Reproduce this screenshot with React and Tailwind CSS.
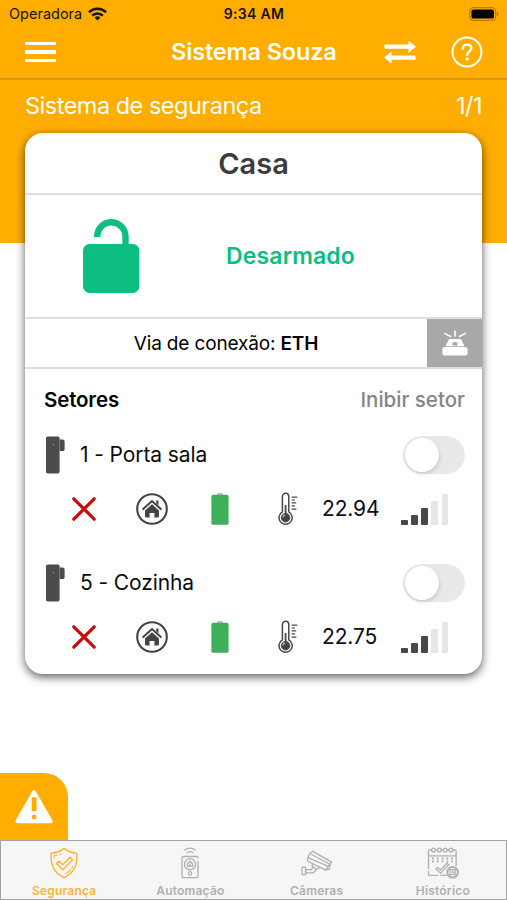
const sectors = [
  { id: 1, name: "1 - Porta sala", temperature: "22.94", signal: 3 },
  { id: 5, name: "5 - Cozinha", temperature: "22.75", signal: 3 },
];

const signalBars = [5, 10, 17, 24, 31];

const WifiIcon = () => (
  <svg className="h-[14px] w-[19px]" viewBox="0 0 19 14" fill="none" stroke="#1a1204" strokeWidth="2.6">
    <path d="M1 5.2a12.2 12.2 0 0 1 17 0" />
    <path d="M4.2 8.6a7.6 7.6 0 0 1 10.6 0" />
    <path d="M9.5 13.6 6.6 10.7a4.2 4.2 0 0 1 5.8 0Z" fill="#1a1204" stroke="none" />
  </svg>
);

const BatteryStatusIcon = () => (
  <svg className="h-[14px] w-[30px]" viewBox="0 0 30 14">
    <rect x="0.7" y="0.7" width="26" height="12.6" rx="3.8" fill="none" stroke="#b87e08" strokeWidth="1.3" />
    <rect x="2.4" y="2.4" width="22.6" height="9.2" rx="2.2" fill="#000" />
    <path d="M28 4.6c1.8.6 1.8 4.2 0 4.8Z" fill="#b87e08" />
  </svg>
);

const SwapIcon = () => (
  <svg className="h-6 w-8" viewBox="0 0 32 24" fill="#fff">
    <path d="M.5 4.6h24V.8L32 6.7l-7.5 6V8.8H.5Z" />
    <path d="M31.5 15.6h-24v-4L0 17.6l7.5 6v-3.8h24Z" />
  </svg>
);

const HelpIcon = () => (
  <svg className="h-8 w-8" viewBox="0 0 32 32" fill="none" stroke="#fff" strokeWidth="2">
    <circle cx="16" cy="16" r="14.5" />
    <path
      d="M11.8 12.6c0-2.5 1.9-4 4.3-4 2.5 0 4.2 1.5 4.2 3.7 0 3.4-4.1 3.3-4.1 6.5"
      strokeWidth="2.4"
      strokeLinecap="round"
    />
    <circle cx="16.2" cy="22.9" r="1.7" fill="#fff" stroke="none" />
  </svg>
);

const UnlockedIcon = () => (
  <svg className="h-[74px] w-[57px]" viewBox="0 0 57 74">
    <path d="M14.1 18A14.1 14.1 0 0 1 42.5 17v9" fill="none" stroke="#0cbf80" strokeWidth="6.4" />
    <rect x="0" y="25" width="56.4" height="49" rx="6.5" fill="#0cbf80" />
  </svg>
);

const SirenIcon = () => (
  <svg className="h-[26px] w-[26px]" viewBox="0 0 26 26">
    <path
      d="M13 1v5M2.6 3.4l6 3.1M23.4 3.4l-6 3.1"
      stroke="#fff"
      strokeWidth="1.6"
      strokeLinecap="round"
    />
    <path d="M7.4 9.8h11.2l2.9 5.8h-17Z" fill="#fff" stroke="#fff" strokeWidth="1.4" strokeLinejoin="round" />
    <path d="M10.4 15.6v-1.2a2.6 2.6 0 0 1 5.2 0v1.2Z" fill="#a8a8a8" />
    <rect x="0.4" y="17" width="25.2" height="8.4" rx="2.2" fill="#fff" />
  </svg>
);

const SensorIcon = () => (
  <svg className="h-[38px] w-5" viewBox="0 0 20 38" fill="#4b4b4b">
    <rect x="1" y="0.5" width="13.6" height="37" rx="1.8" />
    <path d="M14.6 3.6h3.2q1.8 0 1.8 1.8v8.2q0 1.4-1.4 1.4h-3.6Z" />
    <circle cx="8.5" cy="8.6" r="0.9" fill="#858585" />
  </svg>
);

const CloseIcon = () => (
  <svg className="h-6 w-6" viewBox="0 0 24 24" stroke="#cc0a0a" strokeWidth="3.2" strokeLinecap="round">
    <path d="M1.8 1.8 22.2 22.2M22.2 1.8 1.8 22.2" />
  </svg>
);

const HomeIcon = () => (
  <svg className="h-8 w-8" viewBox="0 0 32 32">
    <circle cx="16" cy="16" r="14.8" fill="none" stroke="#444" strokeWidth="2.1" />
    <path d="M7.2 16.1 16 8l8.8 8.1" fill="none" stroke="#444" strokeWidth="2" strokeLinecap="round" />
    <path d="M20.2 7.6h2.3v4.8l-2.3-2.1Z" fill="#444" />
    <path d="M16 11.2 23 17.6V23q0 1.6-1.6 1.6h-3V20h-4.8v4.6h-3Q9 24.6 9 23v-5.4Z" fill="#444" />
  </svg>
);

const BatteryIcon = () => (
  <svg className="h-8 w-[18px]" viewBox="0 0 18 32">
    <rect x="6" y="0" width="6" height="3" rx="1" fill="#b9c4bb" />
    <rect x="0.4" y="1.8" width="17.2" height="30" rx="1.5" fill="#3eb059" />
  </svg>
);

const ThermometerIcon = () => (
  <svg className="h-[34px] w-5" viewBox="0 0 20 34" fill="none" stroke="#484848">
    <path d="M4.4 19.9V4.5a3.2 3.2 0 0 1 6.4 0v15.4a6.6 6.6 0 1 1-6.4 0Z" strokeWidth="1.5" />
    <path d="M7.6 13v9" strokeWidth="1.8" />
    <circle cx="7.6" cy="25.7" r="4.3" fill="#444" strokeWidth="0.8" />
    <path d="M5 25.4a2.8 2.8 0 0 1 2.2-2.5" stroke="#bbb" strokeWidth="1.3" />
    <path d="M13.6 5.2h5.6M13.6 8h3.4M13.6 10.9h4.6M13.6 13.8h3.4M13.6 17.2h4.8" strokeWidth="1.2" />
  </svg>
);

const AlertIcon = () => (
  <svg className="h-[34px] w-[38px]" viewBox="0 0 38 34">
    <path
      d="M19 2.2 35.6 31.2H2.4Z"
      fill="#fff"
      stroke="#fff"
      strokeWidth="4"
      strokeLinejoin="round"
    />
    <rect x="16.7" y="7.2" width="4.8" height="14" rx="1" fill="#ffae00" />
    <circle cx="19.1" cy="27" r="2.4" fill="#ffae00" />
  </svg>
);

const ShieldIcon = () => (
  <svg className="h-8 w-8 shrink-0" viewBox="0 0 32 32" fill="none" stroke="currentColor" strokeWidth="1.4" strokeLinejoin="round" strokeLinecap="round">
    <path d="M16 1.4c3.4 2.9 7.8 4.4 12.8 4.7.8 10.7-2.5 20-12.8 24.5C5.7 26.1 2.4 16.8 3.2 6.1 8.2 5.8 12.6 4.3 16 1.4Z" />
    <path d="m8.6 16.5 2.4-2.4 3.7 3.7 7.4-7.6 2.5 2.5-9.9 10Z" />
    <path d="M6 11.5V8.7l3-.6M11.5 7.3l1-.4M18 26.7c2-1.1 3.4-2.3 4.5-3.8M23.8 21l.7-1.3" strokeWidth="1.1" />
  </svg>
);

const AutomationIcon = () => (
  <svg className="h-8 w-8 shrink-0" viewBox="0 0 32 32" fill="none" stroke="currentColor" strokeWidth="1.3" strokeLinecap="round">
    <path d="M10.8 3c3-2.5 7.4-2.5 10.4 0M13.3 5.6c1.7-1.2 3.7-1.2 5.4 0" />
    <path d="M24 14.5V29q0 1.7-1.7 1.7H9.7Q8 30.7 8 29V11.2q0-1.7 1.7-1.7h12.6q1.7 0 1.7 1.3" />
    <circle cx="16" cy="17.3" r="5.6" />
    <path d="M13.5 19.3v-2.6l2.5-2.5 2.5 2.5v2.6ZM16 19v-1.5" />
    <circle cx="16" cy="26.4" r="1.7" />
  </svg>
);

const CameraIcon = () => (
  <svg className="h-8 w-8 shrink-0" viewBox="0 0 32 32" fill="none" stroke="currentColor" strokeWidth="1.3" strokeLinejoin="round">
    <path d="M12 4.4 30.6 15.1l-3.3 4.2L6.9 10.7c.9-3.2 2.5-5.4 5.1-6.3Z" />
    <path d="m6.9 10.7-.3 3.3 17.8 9.2 2.9-3.9M24.4 23.2l3.9-1.1 1.2-5.5M9.7 7l18.7 10" />
    <path d="M11.3 16.5v2.7l4.2 3.3 3.5-2.2M12.3 19.8l-2 2.8H4.6v3.3h7.7l3-3.4" />
    <path d="M1 20.1h3.6v7.5H1Z" />
  </svg>
);

const HistoryIcon = () => (
  <svg className="h-8 w-8 shrink-0" viewBox="0 0 32 32" fill="none" stroke="currentColor" strokeWidth="1.3">
    <path d="M19.5 28.4h-6M11 28.4H3q-1.5 0-1.5-1.5v-3M1.5 22V4.3Q1.5 3 2.8 3h25q1.3 0 1.3 1.3V19M1.5 8.9h27.6" />
    <circle cx="6.5" cy="3" r="1.9" fill="#f6f6f6" />
    <circle cx="12.3" cy="3" r="1.9" fill="#f6f6f6" />
    <circle cx="18.1" cy="3" r="1.9" fill="#f6f6f6" />
    <circle cx="23.9" cy="3" r="1.9" fill="#f6f6f6" />
    <path d="M5 11.5h21.5M5 14.5h21.5" strokeWidth="1.8" strokeDasharray="1.8 3" />
    <path d="m9 21.8 1.5-1.5 3 2.6 6.5-6.7 1.7 1.6-8.2 8.4Z" />
    <circle cx="25.6" cy="25.2" r="5.3" strokeWidth="2" />
    <path d="M23 22.6h5.2v5H23ZM25.6 23.5v2h1.5" />
  </svg>
);

const tabs = [
  { label: "Segurança", Icon: ShieldIcon, active: true },
  { label: "Automação", Icon: AutomationIcon },
  { label: "Câmeras", Icon: CameraIcon },
  { label: "Histórico", Icon: HistoryIcon },
];

const SignalIcon = ({ level }) => (
  <div className="flex h-8 w-[47px] items-end justify-between">
    {signalBars.map((height, index) => (
      <span
        key={height}
        className={`w-[6.5px] rounded-[1px] ${index < level ? "bg-[#484848]" : "bg-[#e5e5e5]"}`}
        style={{ height }}
      />
    ))}
  </div>
);

const Sector = ({ name, temperature, signal }) => (
  <li className="h-[128px]">
    <div className="flex h-[55px] items-center pl-5 pr-[17px]">
      <SensorIcon />
      <span className="ml-[15px] text-[21px] tracking-[-0.1px] text-[#0c0c0c]">{name}</span>
      <button
        type="button"
        role="switch"
        aria-checked="false"
        aria-label={name}
        className="ml-auto flex h-[38px] w-[62px] items-center rounded-full bg-[#e9e9eb] p-[2px]"
      >
        <span className="h-[34px] w-[34px] rounded-full bg-white shadow-[1px_2px_4px_rgba(0,0,0,0.14)]" />
      </button>
    </div>
    <div className="flex h-[54px] items-center pl-[25px]">
      <span className="flex w-[68px] justify-center"><CloseIcon /></span>
      <span className="flex w-[68px] justify-center"><HomeIcon /></span>
      <span className="flex w-[68px] justify-center"><BatteryIcon /></span>
      <span className="flex w-[68px] justify-center"><ThermometerIcon /></span>
      <span className="w-[79px] text-[21px] tracking-[-0.15px] text-[#0c0c0c]">{temperature}</span>
      <SignalIcon level={signal} />
    </div>
  </li>
);

export default function App() {
  return (
    <div className="flex h-[900px] w-[507px] flex-col overflow-hidden bg-white font-['Inter',sans-serif]">
      <div className="h-[243px] shrink-0 bg-[#ffae00] text-white">
        <header className="h-20 border-b-2 border-[#d9950a]">
          <div className="grid h-[27px] grid-cols-3 items-center pl-[9px] pr-2 text-[14.5px] text-[#1a1204]">
            <div className="flex items-center gap-[6px]">
              <span>Operadora</span>
              <WifiIcon />
            </div>
            <span className="text-center text-[14px] font-semibold tracking-[0.3px]">9:34 AM</span>
            <span className="flex justify-end"><BatteryStatusIcon /></span>
          </div>
          <div className="flex h-[50px] items-center pl-[25px] pr-6">
            <button type="button" aria-label="Menu" className="flex w-[31px] flex-col gap-[5px]">
              <span className="h-[3.5px] bg-white" />
              <span className="h-[3.5px] bg-white" />
              <span className="h-[3.5px] bg-white" />
            </button>
            <h1 className="ml-[115px] w-[213px] whitespace-nowrap text-[23.5px] font-semibold tracking-[-0.15px]">
              Sistema Souza
            </h1>
            <SwapIcon />
            <span className="ml-auto"><HelpIcon /></span>
          </div>
        </header>
        <div className="flex h-[52px] items-center justify-between px-[25px] text-[23.5px] tracking-[-0.5px]">
          <span>Sistema de segurança</span>
          <span>1/1</span>
        </div>
      </div>

      <main className="mx-[25px] -mt-[110px] h-[541px] shrink-0 overflow-hidden rounded-[18px] bg-white shadow-[0_3px_10px_rgba(0,0,0,0.65)]">
        <h2 className="flex h-[62px] items-center justify-center border-b-2 border-[#dedede] pt-px text-[29px] font-semibold text-[#3c3c3c]">
          Casa
        </h2>
        <div className="flex h-[124px] items-center border-b-2 border-[#dedede] pl-[58px]">
          <UnlockedIcon />
          <span className="ml-[86px] pt-px text-[23px] font-semibold tracking-[0.15px] text-[#0cbf80]">Desarmado</span>
        </div>
        <div className="flex h-[50px] border-b-2 border-[#dedede]">
          <p className="flex flex-1 items-center justify-center pt-[2px] text-[19px] tracking-[-0.15px] text-black">
            <span>
              Via de conexão: <b className="font-semibold">ETH</b>
            </span>
          </p>
          <span className="flex w-[55px] items-center justify-center bg-[#a8a8a8]">
            <SirenIcon />
          </span>
        </div>
        <div className="flex h-[58px] items-center justify-between pl-[19px] pr-[17px] pt-[5px] text-[20.5px]">
          <h3 className="font-semibold tracking-[-0.15px] text-black">Setores</h3>
          <span className="font-medium text-[#858585]">Inibir setor</span>
        </div>
        <ul>
          {sectors.map((sector) => (
            <Sector key={sector.id} {...sector} />
          ))}
        </ul>
      </main>

      <div className="mt-auto flex h-[67px] w-[68px] shrink-0 items-center justify-center rounded-tr-[24px] bg-[#ffae00]">
        <AlertIcon />
      </div>
      <nav className="flex h-[60px] shrink-0 border border-[#a3a3a3] bg-[#f6f6f6]">
        {tabs.map(({ label, Icon, active }) => (
          <a
            key={label}
            className={`flex flex-1 flex-col items-center gap-[3px] pt-[6px] text-[12px] font-semibold leading-[17px] tracking-[0.2px] ${active ? "text-[#f8b536]" : "text-[#b0b0b0]"}`}
          >
            <Icon />
            {label}
          </a>
        ))}
      </nav>
    </div>
  );
}
